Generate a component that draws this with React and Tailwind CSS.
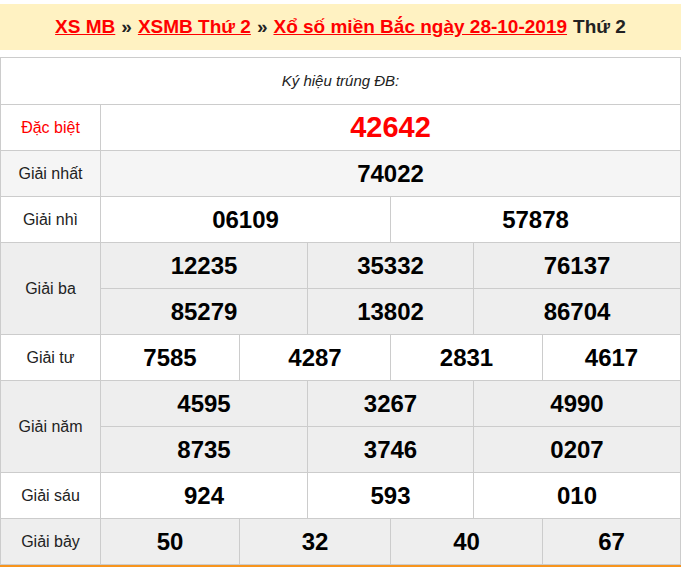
const B = "border-[#cccccc]";
function Cells({ vals, widths, cls = "" }) {
  return (
    <div className="flex h-[46px]">
      {vals.map((v, i) => (
        <div key={i} style={{ width: widths[i] }} className={`flex items-center justify-center border-b border-r ${B} text-[24px] font-bold text-black ${cls}`}>{v}</div>
      ))}
    </div>
  );
}
function Row({ label, rows, widths, bg = "bg-white", labelCls = "text-[#222]" }) {
  return (
    <div className={`flex ${bg}`}>
      <div className={`w-[101px] shrink-0 flex items-center justify-center border-l border-r border-b ${B} text-[16px] ${labelCls}`}>{label}</div>
      <div className="flex flex-col">
        {rows.map((r, i) => <Cells key={i} vals={r} widths={widths} />)}
      </div>
    </div>
  );
}
const W3 = [207, 166, 207], W2 = [290, 290], W4 = [139, 151, 152, 138], W1 = [580];
export default function App() {
  return (
    <div className="w-[681px] h-[567px] bg-white overflow-hidden" style={{ fontFamily: '"Liberation Sans", Arial, sans-serif' }}>
      <div className="mt-[4px] h-[46px] bg-[#fff2c2] flex items-center justify-center text-[19px] font-bold">
        <span className="text-[#f00] underline">XS MB</span><span className="mx-[6px] text-[#222]">»</span>
        <span className="text-[#f00] underline">XSMB Thứ 2</span><span className="mx-[6px] text-[#222]">»</span>
        <span className="text-[#f00] underline">Xổ số miền Bắc ngày 28-10-2019</span><span className="ml-[6px] text-[#222]">Thứ 2</span>
      </div>
      <div className={`mt-[7px] border-t ${B}`}>
        <div className={`h-[47px] flex items-center justify-center border-l border-r border-b ${B} italic text-[15px] text-[#222]`}>Ký hiệu trúng ĐB:</div>
        <div className="flex bg-white">
          <div className={`w-[101px] flex items-center justify-center border-l border-r border-b ${B} text-[16px] text-[#f00]`}>Đặc biệt</div>
          <div className={`w-[580px] h-[46px] flex items-center justify-center border-r border-b ${B} text-[29px] font-bold text-[#f00]`}>42642</div>
        </div>
        <Row label="Giải nhất" rows={[["74022"]]} widths={W1} bg="bg-[#f5f5f5]" />
        <Row label="Giải nhì" rows={[["06109", "57878"]]} widths={W2} />
        <Row label="Giải ba" rows={[["12235", "35332", "76137"], ["85279", "13802", "86704"]]} widths={W3} bg="bg-[#eeeeee]" />
        <Row label="Giải tư" rows={[["7585", "4287", "2831", "4617"]]} widths={W4} />
        <Row label="Giải năm" rows={[["4595", "3267", "4990"], ["8735", "3746", "0207"]]} widths={W3} bg="bg-[#eeeeee]" />
        <Row label="Giải sáu" rows={[["924", "593", "010"]]} widths={W3} />
        <Row label="Giải bảy" rows={[["50", "32", "40", "67"]]} widths={W4} bg="bg-[#eeeeee]" />
        <div className="h-[4px] bg-[#f7941d]" />
      </div>
    </div>
  );
}
